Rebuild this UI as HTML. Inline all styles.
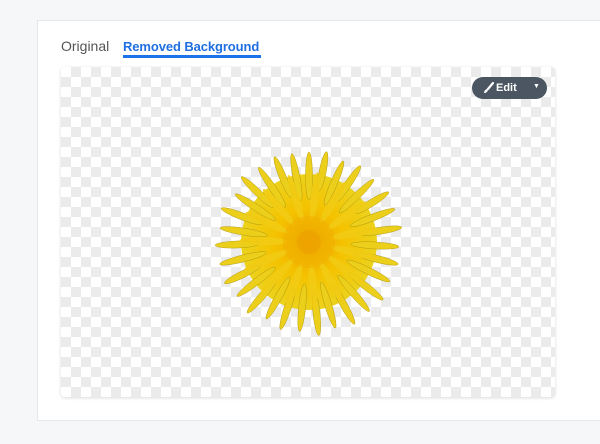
<!DOCTYPE html><html><head><style>
body{margin:0;width:600px;height:444px;background:#f6f7f9;font-family:"Liberation Sans",sans-serif;overflow:hidden;position:relative}
.card{position:absolute;left:37px;top:20px;width:580px;height:399px;background:#fff;border:1px solid #e6e8ec}
.t1{position:absolute;left:61px;top:38px;font-size:14px;color:#555}
.t2{position:absolute;left:123px;top:39px;font-size:13px;color:#1f6fe0;font-weight:bold;letter-spacing:-0.1px}
.ul{position:absolute;left:123px;top:55px;width:138px;height:3px;background:#1a73e8}
.img{position:absolute;left:61px;top:67px;width:494px;height:330px;border-radius:4px;box-shadow:0 1px 3px rgba(0,0,0,.15);
background:repeating-conic-gradient(#ebebeb 0 25%,#fff 0 50%) 0 0/20px 20px}
.btn{position:absolute;left:472px;top:77px;width:75px;height:22px;border-radius:11px;background:#4b5662;color:#fff;font-size:11px;font-weight:bold}
</style></head><body>
<div class="card"></div>
<div class="t1">Original</div><div class="t2">Removed Background</div><div class="ul"></div>
<div class="img"></div>
<div class="btn"><svg style="position:absolute;left:11px;top:5px" width="11" height="12" viewBox="0 0 11 12"><path d="M10 1 L5 7" stroke="#fff" stroke-width="2.2" stroke-linecap="round"/><path d="M4 7 Q1 8 1 11 Q4 11 5 8Z" fill="#fff"/></svg><span style="position:absolute;left:24px;top:5px">Edit</span><span style="position:absolute;left:61px;top:6px;font-size:7px">▼</span></div>
<svg style="position:absolute;left:0;top:0" width="600" height="444">
<defs><radialGradient id="g"><stop offset="0" stop-color="#f0a000"/><stop offset=".5" stop-color="#f4c200"/><stop offset="1" stop-color="#ecd21c"/></radialGradient></defs>
<g transform="translate(309,242)">
<circle r="68" fill="url(#g)"/>
<g fill="#eccf1a" stroke="#a8900e" stroke-width=".4">
<ellipse cx="0" cy="-66" rx="3.5" ry="24" transform="rotate(0)"/>
<ellipse cx="0" cy="-72" rx="3.5" ry="20" transform="rotate(11)"/>
<ellipse cx="0" cy="-64" rx="3.5" ry="24" transform="rotate(23)"/>
<ellipse cx="0" cy="-70" rx="3.5" ry="22" transform="rotate(34)"/>
<ellipse cx="0" cy="-66" rx="3.5" ry="24" transform="rotate(46)"/>
<ellipse cx="0" cy="-74" rx="3.5" ry="20" transform="rotate(58)"/>
<ellipse cx="0" cy="-68" rx="3.5" ry="24" transform="rotate(69)"/>
<ellipse cx="0" cy="-72" rx="3.5" ry="22" transform="rotate(81)"/>
<ellipse cx="0" cy="-66" rx="3.5" ry="24" transform="rotate(93)"/>
<ellipse cx="0" cy="-70" rx="3.5" ry="22" transform="rotate(104)"/>
<ellipse cx="0" cy="-66" rx="3.5" ry="24" transform="rotate(116)"/>
<ellipse cx="0" cy="-72" rx="3.5" ry="22" transform="rotate(128)"/>
<ellipse cx="0" cy="-68" rx="3.5" ry="24" transform="rotate(139)"/>
<ellipse cx="0" cy="-72" rx="3.5" ry="22" transform="rotate(151)"/>
<ellipse cx="0" cy="-66" rx="3.5" ry="24" transform="rotate(163)"/>
<ellipse cx="0" cy="-72" rx="3.5" ry="22" transform="rotate(174)"/>
<ellipse cx="0" cy="-66" rx="3.5" ry="24" transform="rotate(186)"/>
<ellipse cx="0" cy="-70" rx="3.5" ry="22" transform="rotate(198)"/>
<ellipse cx="0" cy="-64" rx="3.5" ry="24" transform="rotate(209)"/>
<ellipse cx="0" cy="-72" rx="3.5" ry="22" transform="rotate(221)"/>
<ellipse cx="0" cy="-66" rx="3.5" ry="24" transform="rotate(233)"/>
<ellipse cx="0" cy="-74" rx="3.5" ry="20" transform="rotate(244)"/>
<ellipse cx="0" cy="-68" rx="3.5" ry="24" transform="rotate(256)"/>
<ellipse cx="0" cy="-72" rx="3.5" ry="22" transform="rotate(268)"/>
<ellipse cx="0" cy="-66" rx="3.5" ry="24" transform="rotate(279)"/>
<ellipse cx="0" cy="-72" rx="3.5" ry="22" transform="rotate(291)"/>
<ellipse cx="0" cy="-64" rx="3.5" ry="24" transform="rotate(303)"/>
<ellipse cx="0" cy="-72" rx="3.5" ry="22" transform="rotate(314)"/>
<ellipse cx="0" cy="-66" rx="3.5" ry="24" transform="rotate(326)"/>
<ellipse cx="0" cy="-70" rx="3.5" ry="22" transform="rotate(338)"/>
<ellipse cx="0" cy="-66" rx="3.5" ry="24" transform="rotate(349)"/>
</g>
<g fill="#f2cc14" opacity=".85">
<ellipse cx="0" cy="-46" rx="4" ry="24" transform="rotate(7)"/>
<ellipse cx="0" cy="-46" rx="4" ry="24" transform="rotate(31)"/>
<ellipse cx="0" cy="-46" rx="4" ry="24" transform="rotate(55)"/>
<ellipse cx="0" cy="-46" rx="4" ry="24" transform="rotate(79)"/>
<ellipse cx="0" cy="-46" rx="4" ry="24" transform="rotate(103)"/>
<ellipse cx="0" cy="-46" rx="4" ry="24" transform="rotate(127)"/>
<ellipse cx="0" cy="-46" rx="4" ry="24" transform="rotate(151)"/>
<ellipse cx="0" cy="-46" rx="4" ry="24" transform="rotate(175)"/>
<ellipse cx="0" cy="-46" rx="4" ry="24" transform="rotate(199)"/>
<ellipse cx="0" cy="-46" rx="4" ry="24" transform="rotate(223)"/>
<ellipse cx="0" cy="-46" rx="4" ry="24" transform="rotate(247)"/>
<ellipse cx="0" cy="-46" rx="4" ry="24" transform="rotate(271)"/>
<ellipse cx="0" cy="-46" rx="4" ry="24" transform="rotate(295)"/>
<ellipse cx="0" cy="-46" rx="4" ry="24" transform="rotate(319)"/>
<ellipse cx="0" cy="-46" rx="4" ry="24" transform="rotate(343)"/>
</g>
<circle r="26" fill="#f0b000" opacity=".6"/>
<circle r="12" fill="#ec9c00" opacity=".5"/>
</g></svg>
</body></html>
